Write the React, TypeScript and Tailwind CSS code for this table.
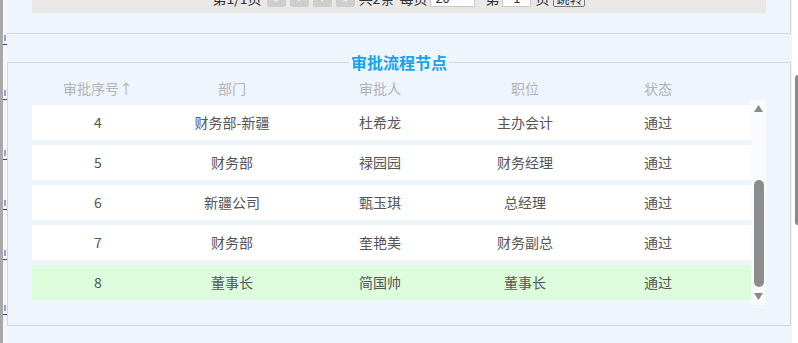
import React from "react";

type Row = { no: string; dept: string; person: string; post: string; state: string; current?: boolean };

const rows: Row[] = [
  { no: "4", dept: "财务部-新疆", person: "杜希龙", post: "主办会计", state: "通过" },
  { no: "5", dept: "财务部", person: "禄园园", post: "财务经理", state: "通过" },
  { no: "6", dept: "新疆公司", person: "甄玉琪", post: "总经理", state: "通过" },
  { no: "7", dept: "财务部", person: "奎艳美", post: "财务副总", state: "通过" },
  { no: "8", dept: "董事长", person: "简国帅", post: "董事长", state: "通过", current: true },
];

const cols = "grid grid-cols-[132px_136px_160px_130px_136px_1fr]";
const font = { fontFamily: '"Noto Sans CJK SC", "Noto Sans", sans-serif' };

function PageBtn({ label }: { label: string }) {
  return (
    <span className="flex h-[18px] w-[19px] items-center justify-center rounded-[2px] bg-[#cdcdcd] text-[12px] leading-none text-white">
      {label}
    </span>
  );
}

function Arrow({ down }: { down?: boolean }) {
  return (
    <svg width="9" height="7" viewBox="0 0 9 7" className="block">
      {down ? <path d="M0 0 H9 L4.5 7 Z" fill="#8a8a8a" /> : <path d="M0 7 H9 L4.5 0 Z" fill="#8a8a8a" />}
    </svg>
  );
}

function LinkBit({ top }: { top: number }) {
  return (
    <div className="h-[10px] w-[4px] border-b border-[#2a3fd0]" style={{ marginTop: top }}>
      <div className="ml-[1px] h-[6px] w-[2px] bg-[#5566dd] opacity-60" />
    </div>
  );
}

export default function App() {
  return (
    <div className="flex h-[343px] w-[798px] overflow-hidden bg-white text-[14px]" style={font}>
      {/* left edge: window frame and clipped link column */}
      <div className="flex w-[7px] shrink-0">
        <div className="w-[3px] bg-[#a9a9a9]" />
        <div className="flex w-[4px] flex-col bg-[#f4f6fa]">
          <LinkBit top={35} />
          <LinkBit top={45} />
          <LinkBit top={50} />
          <LinkBit top={40} />
          <LinkBit top={40} />
          <LinkBit top={45} />
        </div>
      </div>

      {/* main panel */}
      <div className="flex w-[785px] shrink-0 flex-col bg-[#eef5fd]">
        {/* list section with pager */}
        <div className="h-[34px] w-[784px] overflow-hidden border-r border-b border-[#d6d6d6]">
          <div className="ml-[25px] mt-[-15px] flex h-[28px] w-[734px] items-end justify-center bg-[#e9e8e6] pb-[6px] text-[#333]">
            <div className="flex h-[18px] items-center">
              <span className="mr-[5px]">第1/1页</span>
              <div className="flex gap-[4px]">
                <PageBtn label="«" />
                <PageBtn label="‹" />
                <PageBtn label="›" />
                <PageBtn label="»" />
              </div>
              <span className="ml-[4px]">共2条</span>
              <span className="ml-[5px]">每页</span>
              <span className="ml-[3px] flex h-[18px] w-[45px] items-center border border-[#c9c9c9] bg-white pl-[4px] text-[13px]">20</span>
              <span className="ml-[10px]">第</span>
              <span className="ml-[3px] flex h-[18px] w-[29px] items-center justify-center border border-[#c9c9c9] bg-white text-[13px]">1</span>
              <span className="ml-[4px]">页</span>
              <span className="ml-[4px] flex h-[18px] w-[32px] items-center justify-center rounded-[2px] border border-[#767676] bg-[#efefef] text-[13px]">跳转</span>
            </div>
          </div>
        </div>

        {/* approval nodes */}
        <fieldset className="mt-[17px] w-[784px] border border-[#d6d6d6] px-[24px] pb-[20px]">
          <legend className="mx-auto px-[2px] text-[16px] font-bold leading-[22px] text-[#14a3ec]">审批流程节点</legend>
          <div className="mt-[5px] w-[734px]">
            <div className={`${cols} h-[20px] w-[719px] items-center text-center text-[#b3b3b3]`}>
              <span>审批序号↑</span>
              <span>部门</span>
              <span>审批人</span>
              <span>职位</span>
              <span>状态</span>
              <span />
            </div>
            <div className="mt-[2px] flex h-[205px]">
              <div className="flex w-[719px] flex-col gap-[5px] pt-[5px]">
                {rows.map((r) => (
                  <div
                    key={r.no}
                    className={`${cols} h-[35px] items-center text-center text-[#555] ${r.current ? "bg-[#dcfcdc]" : "bg-white"}`}
                  >
                    <span>{r.no}</span>
                    <span>{r.dept}</span>
                    <span>{r.person}</span>
                    <span>{r.post}</span>
                    <span>{r.state}</span>
                    <span />
                  </div>
                ))}
              </div>
              <div className="flex w-[15px] flex-col items-center bg-[#fafafa] pt-[5px]">
                <Arrow />
                <div className="mt-[68px] h-[107px] w-[10px] rounded-full bg-[#8c8c8c]" />
                <div className="mt-[6px]">
                  <Arrow down />
                </div>
              </div>
            </div>
          </div>
        </fieldset>
      </div>

      {/* outer scrollbar */}
      <div className="flex w-[6px] shrink-0 justify-end bg-white">
        <div className="mt-[75px] h-[150px] w-[3px] rounded-l-full bg-[#8a8a8a]" />
      </div>
    </div>
  );
}
